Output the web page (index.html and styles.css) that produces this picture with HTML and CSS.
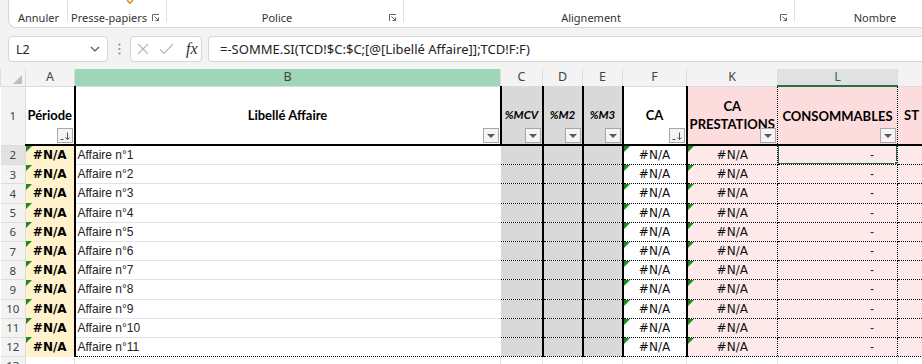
FILE: index.html
```html
<!DOCTYPE html>
<html lang="fr">
  <head>
    <meta charset="UTF-8" />
    <title>Suivi affaires - Excel</title>
    <link rel="stylesheet" href="styles.css">
  </head>

  <body>
    <div class="ribbon">
      <div class="ribbon-panel">
        <div class="group g-undo">
          <span class="group-label">Annuler</span>
        </div>
        <div class="group g-clip">
          <svg class="brush" width="8" height="4" viewBox="0 0 8 4"><path d="M1 0 L4 3.2 L7 0" fill="none" stroke="#e8862a" stroke-width="1.6"/></svg>
          <span class="group-label">Presse-papiers</span>
          <svg class="launcher" width="8" height="8" viewBox="0 0 8 8"><path d="M0.5 7 V0.5 H7 M2.5 2.5 L6.5 6.5 M6.5 3.5 V6.5 H3.5" fill="none" stroke="#666" stroke-width="1"/></svg>
        </div>
        <div class="group g-font">
          <span class="group-label">Police</span>
          <svg class="launcher" width="8" height="8" viewBox="0 0 8 8"><path d="M0.5 7 V0.5 H7 M2.5 2.5 L6.5 6.5 M6.5 3.5 V6.5 H3.5" fill="none" stroke="#666" stroke-width="1"/></svg>
        </div>
        <div class="group g-align">
          <span class="group-label">Alignement</span>
          <svg class="launcher" width="8" height="8" viewBox="0 0 8 8"><path d="M0.5 7 V0.5 H7 M2.5 2.5 L6.5 6.5 M6.5 3.5 V6.5 H3.5" fill="none" stroke="#666" stroke-width="1"/></svg>
        </div>
        <div class="group g-number">
          <span class="group-label">Nombre</span>
        </div>
      </div>
    </div>

    <div class="formula-bar">
      <div class="name-box">
        <span>L2</span>
        <svg width="10" height="6" viewBox="0 0 10 6"><path d="M1 1 L5 5 L9 1" fill="none" stroke="#555" stroke-width="1.2"/></svg>
      </div>
      <div class="grip">
        <svg width="3" height="12" viewBox="0 0 3 12"><circle cx="1.5" cy="1.5" r="1.1" fill="#8a8a8a"/><circle cx="1.5" cy="6" r="1.1" fill="#8a8a8a"/><circle cx="1.5" cy="10.5" r="1.1" fill="#8a8a8a"/></svg>
      </div>
      <div class="fx-box">
        <svg width="12" height="12" viewBox="0 0 12 12"><path d="M1 1 L11 11 M11 1 L1 11" stroke="#b8b8b8" stroke-width="1.2"/></svg>
        <svg width="15" height="12" viewBox="0 0 15 12"><path d="M1 6.5 L5 10.5 L14 1" fill="none" stroke="#b8b8b8" stroke-width="1.2"/></svg>
        <span class="fx">fx</span>
      </div>
      <div class="formula-input">=-SOMME.SI(TCD!$C:$C;[@[Libellé Affaire]];TCD!F:F)</div>
    </div>

    <table class="sheet">
      <colgroup>
        <col class="w-rh"><col class="w-a"><col class="w-b"><col class="w-c"><col class="w-d"><col class="w-e"><col class="w-f"><col class="w-k"><col class="w-l"><col class="w-m">
      </colgroup>
      <tr class="col-heads">
        <th class="corner"><span class="corner-tri"></span></th>
        <th>A</th>
        <th class="hl-b">B</th>
        <th>C</th>
        <th>D</th>
        <th>E</th>
        <th>F</th>
        <th>K</th>
        <th class="hl-l">L</th>
        <th></th>
      </tr>
      <tr class="head-row">
        <th class="rh">1</th>
        <td class="ha">Période<span class="filter sorted"><svg width="12" height="10" viewBox="0 0 12 10"><path d="M1.5 8.5 H4.5 M8.5 1.5 V8.5 M6.5 6.5 L8.5 8.5 L10.5 6.5" fill="none" stroke="#555" stroke-width="1"/></svg></span></td>
        <td class="hb">Libellé Affaire<span class="filter"></span></td>
        <td class="hg pct">%MCV<span class="filter"></span></td>
        <td class="hg pct">%M2<span class="filter"></span></td>
        <td class="hg pct">%M3<span class="filter"></span></td>
        <td class="hf">CA<span class="filter sorted"><svg width="12" height="10" viewBox="0 0 12 10"><path d="M1.5 8.5 H4.5 M8.5 1.5 V8.5 M6.5 6.5 L8.5 8.5 L10.5 6.5" fill="none" stroke="#555" stroke-width="1"/></svg></span></td>
        <td class="hk">CA<br>PRESTATIONS<span class="filter"></span></td>
        <td class="hl">CONSOMMABLES<span class="filter"></span></td>
        <td class="hm">ST CONSOMMABLES</td>
      </tr>
      <tr class="sel-row">
        <th class="rh">2</th>
        <td class="ca err">#N/A</td>
        <td class="cb">Affaire n°1</td>
        <td class="cg"></td><td class="cg"></td><td class="cg"></td>
        <td class="cf err">#N/A</td>
        <td class="ck err">#N/A</td>
        <td class="cl">-<span class="sel"></span></td>
        <td class="cm"></td>
      </tr>
      <tr>
        <th class="rh">3</th>
        <td class="ca err">#N/A</td>
        <td class="cb">Affaire n°2</td>
        <td class="cg"></td><td class="cg"></td><td class="cg"></td>
        <td class="cf err">#N/A</td>
        <td class="ck err">#N/A</td>
        <td class="cl">-</td>
        <td class="cm"></td>
      </tr>
      <tr>
        <th class="rh">4</th>
        <td class="ca err">#N/A</td>
        <td class="cb">Affaire n°3</td>
        <td class="cg"></td><td class="cg"></td><td class="cg"></td>
        <td class="cf err">#N/A</td>
        <td class="ck err">#N/A</td>
        <td class="cl">-</td>
        <td class="cm"></td>
      </tr>
      <tr>
        <th class="rh">5</th>
        <td class="ca err">#N/A</td>
        <td class="cb">Affaire n°4</td>
        <td class="cg"></td><td class="cg"></td><td class="cg"></td>
        <td class="cf err">#N/A</td>
        <td class="ck err">#N/A</td>
        <td class="cl">-</td>
        <td class="cm"></td>
      </tr>
      <tr>
        <th class="rh">6</th>
        <td class="ca err">#N/A</td>
        <td class="cb">Affaire n°5</td>
        <td class="cg"></td><td class="cg"></td><td class="cg"></td>
        <td class="cf err">#N/A</td>
        <td class="ck err">#N/A</td>
        <td class="cl">-</td>
        <td class="cm"></td>
      </tr>
      <tr>
        <th class="rh">7</th>
        <td class="ca err">#N/A</td>
        <td class="cb">Affaire n°6</td>
        <td class="cg"></td><td class="cg"></td><td class="cg"></td>
        <td class="cf err">#N/A</td>
        <td class="ck err">#N/A</td>
        <td class="cl">-</td>
        <td class="cm"></td>
      </tr>
      <tr>
        <th class="rh">8</th>
        <td class="ca err">#N/A</td>
        <td class="cb">Affaire n°7</td>
        <td class="cg"></td><td class="cg"></td><td class="cg"></td>
        <td class="cf err">#N/A</td>
        <td class="ck err">#N/A</td>
        <td class="cl">-</td>
        <td class="cm"></td>
      </tr>
      <tr>
        <th class="rh">9</th>
        <td class="ca err">#N/A</td>
        <td class="cb">Affaire n°8</td>
        <td class="cg"></td><td class="cg"></td><td class="cg"></td>
        <td class="cf err">#N/A</td>
        <td class="ck err">#N/A</td>
        <td class="cl">-</td>
        <td class="cm"></td>
      </tr>
      <tr>
        <th class="rh">10</th>
        <td class="ca err">#N/A</td>
        <td class="cb">Affaire n°9</td>
        <td class="cg"></td><td class="cg"></td><td class="cg"></td>
        <td class="cf err">#N/A</td>
        <td class="ck err">#N/A</td>
        <td class="cl">-</td>
        <td class="cm"></td>
      </tr>
      <tr>
        <th class="rh">11</th>
        <td class="ca err">#N/A</td>
        <td class="cb">Affaire n°10</td>
        <td class="cg"></td><td class="cg"></td><td class="cg"></td>
        <td class="cf err">#N/A</td>
        <td class="ck err">#N/A</td>
        <td class="cl">-</td>
        <td class="cm"></td>
      </tr>
      <tr class="last-row">
        <th class="rh">12</th>
        <td class="ca err">#N/A</td>
        <td class="cb">Affaire n°11</td>
        <td class="cg"></td><td class="cg"></td><td class="cg"></td>
        <td class="cf err">#N/A</td>
        <td class="ck err">#N/A</td>
        <td class="cl">-</td>
        <td class="cm"></td>
      </tr>
      <tr class="empty-row">
        <th class="rh">13</th>
        <td></td><td></td><td></td><td></td><td></td><td></td><td></td><td></td><td></td>
      </tr>
    </table>
  </body>
</html>
```

FILE: styles.css
```css
html, body {
  margin: 0;
  padding: 0;
}

body {
  width: 922px;
  height: 364px;
  overflow: hidden;
  background: #f3f3f3;
  font-family: 'Noto Sans', sans-serif;
  color: #262626;
}

/* ribbon (bottom strip only) */
.ribbon {
  height: 28px;
}

.ribbon-panel {
  display: flex;
  height: 27px;
  margin-left: 8px;
  background: #fff;
  border-left: 1px solid #d6d6d6;
  border-bottom: 1px solid #d6d6d6;
  border-bottom-left-radius: 8px;
}

.group {
  position: relative;
  display: flex;
  flex-shrink: 0;
  align-items: center;
  box-sizing: border-box;
  height: 16px;
  margin-top: 10px;
}

.group::after {
  content: "";
  position: absolute;
  right: 0;
  top: -10px;
  height: 22px;
  border-right: 1px solid #e1e1e1;
}

.g-undo { width: 59px; }
.g-clip { width: 99px; }
.g-font { width: 237px; }
.g-align { width: 391px; }
.g-number { width: 160px; }
.g-number::after { display: none; }

.group-label {
  flex: 1;
  text-align: center;
  font-size: 11px;
  line-height: 16px;
  color: #333;
  white-space: nowrap;
}

.launcher {
  margin: 0 7px 0 2px;
}

.brush {
  position: absolute;
  left: 58px;
  top: -10px;
}

/* formula bar */
.formula-bar {
  display: flex;
  align-items: center;
  height: 26px;
  padding: 8px 0 7px 8px;
}

.name-box {
  display: flex;
  align-items: center;
  justify-content: space-between;
  box-sizing: border-box;
  width: 100px;
  height: 26px;
  padding: 0 7px 0 7px;
  background: #fff;
  border: 1px solid #d6d6d6;
  border-radius: 4px;
  font-size: 12.5px;
}

.grip {
  display: flex;
  justify-content: center;
  width: 22px;
}

.fx-box {
  display: flex;
  align-items: center;
  gap: 10px;
  box-sizing: border-box;
  width: 72px;
  height: 26px;
  padding: 0 0 0 6px;
  background: #fff;
  border: 1px solid #d6d6d6;
  border-radius: 4px;
}

.fx {
  font-family: 'Liberation Serif', serif;
  font-style: italic;
  font-size: 16px;
  color: #333;
  margin-left: 2px;
}

.formula-input {
  flex: 1;
  box-sizing: border-box;
  height: 26px;
  margin-left: 6px;
  padding-left: 11px;
  line-height: 24px;
  background: #fff;
  border: 1px solid #d6d6d6;
  border-right: none;
  border-radius: 4px 0 0 4px;
  font-size: 13px;
  color: #222;
  white-space: nowrap;
}

/* sheet grid */
.sheet {
  border-collapse: collapse;
  table-layout: fixed;
  width: 997px;
  background: #fff;
}

.w-rh { width: 25px; }
.w-a { width: 49px; }
.w-b { width: 426px; }
.w-c { width: 42px; }
.w-d { width: 40px; }
.w-e { width: 40px; }
.w-f { width: 64px; }
.w-k { width: 91px; }
.w-l { width: 120px; }
.w-m { width: 100px; }

.sheet td {
  position: relative;
  padding: 0 2px;
  height: 18.2px;
  border: none;
  white-space: nowrap;
  overflow: hidden;
  font-family: 'Liberation Sans', sans-serif;
  font-size: 12px;
  line-height: 16px;
}

.col-heads th {
  height: 16px;
  padding: 0;
  background: #f3f3f3;
  border: 1px solid #dcdcdc;
  border-top: none;
  font-weight: normal;
  font-size: 12.5px;
  line-height: 16px;
  color: #444;
}

.col-heads .hl-b {
  background: #9fd6b7;
}

.col-heads .hl-l {
  background: #e1e1e1;
  color: #217346;
  border-bottom: 2px solid #217346;
}

.corner {
  position: relative;
}

.corner-tri {
  position: absolute;
  right: 3px;
  bottom: 2px;
  border-bottom: 9px solid #bdbdbd;
  border-left: 9px solid transparent;
}

.rh {
  padding: 0;
  background: #f3f3f3;
  border: 1px solid #dcdcdc;
  border-left: none;
  font-weight: normal;
  font-size: 11.5px;
  color: #444;
  text-align: center;
  vertical-align: middle;
}

.sel-row .rh {
  background: #e1e1e1;
}

/* row 1: table headers */
.sheet .head-row td {
  height: 57px;
  padding: 0;
  border-bottom: 2px solid #000;
  font-family: 'Lato', sans-serif;
  font-weight: 700;
  font-size: 13px;
  line-height: 18px;
  color: #000;
  text-align: center;
  vertical-align: middle;
}

.sheet .head-row .ha { border-right: 2px solid #000; }
.sheet .head-row .hb { border-right: 2px solid #000; }

.sheet .head-row .hg {
  background: #d9d9d9;
  border-right: 2px solid #000;
}

.sheet .head-row .pct {
  font-size: 11.5px;
  font-style: italic;
}

.sheet .head-row .hf { border-right: 2px solid #000; }

.sheet .head-row .hk {
  background: #fcdcdc;
  border-right: 1px dotted #000;
}

.sheet .head-row .hl {
  background: #fcdcdc;
  border-right: 1px dotted #000;
}

.sheet .head-row .hm {
  background: #fcdcdc;
  text-align: left;
  padding-left: 6px;
}

.filter {
  position: absolute;
  right: 1px;
  bottom: 1px;
  box-sizing: border-box;
  width: 16px;
  height: 15px;
  background: #f4f4f4;
  border: 1px solid #a8a8a8;
}

.filter::after {
  content: "";
  position: absolute;
  left: 3px;
  top: 5px;
  border-top: 4px solid #5a5a5a;
  border-left: 4px solid transparent;
  border-right: 4px solid transparent;
}

.filter.sorted::after {
  display: none;
}

.filter svg {
  display: block;
  margin: 2px 0 0 1px;
}

/* data cells */
.sheet td.ca {
  background: #fff2cc;
  border-right: 2px solid #000;
  text-align: center;
  font-family: 'DejaVu Sans', sans-serif;
  font-weight: 700;
  font-size: 12px;
  color: #000;
}

.sheet td.cb {
  color: #222;
  border-bottom: 1px solid #e2e2e2;
}

.sheet td.cg {
  background: #d9d9d9;
  border-bottom: 1px dotted #000;
  border-right: 2px solid #000;
}

.sheet td.cf,
.sheet td.ck {
  font-family: 'DejaVu Sans', sans-serif;
  font-size: 12px;
  text-align: center;
  color: #111;
}

.sheet td.cf {
  border-bottom: 1px dotted #000;
  border-right: 2px solid #000;
}

.sheet td.ck {
  background: #fde9e9;
  border-bottom: 1px dotted #000;
  border-right: 1px dotted #000;
}

.sheet td.cl {
  background: #fde9e9;
  border-bottom: 1px dotted #000;
  border-right: 1px dotted #000;
  text-align: right;
  padding-right: 23px;
}

.sheet td.cm {
  background: #fde9e9;
  border-bottom: 1px dotted #000;
}

.sheet .last-row td.cb {
  border-bottom: 1px dotted #000;
}

.sheet .empty-row td {
  border-right: 1px solid #e2e2e2;
}

.err::before {
  content: "";
  position: absolute;
  left: 0;
  top: 0;
  border-top: 6px solid #1a8c1a;
  border-right: 6px solid transparent;
}

.sel {
  position: absolute;
  left: -1px;
  top: -2px;
  right: -1px;
  bottom: -1px;
  border: 2px solid #217346;
}

.sel::after {
  content: "";
  position: absolute;
  right: -5px;
  bottom: -5px;
  width: 5px;
  height: 5px;
  background: #217346;
  border: 1px solid #fff;
}
```
